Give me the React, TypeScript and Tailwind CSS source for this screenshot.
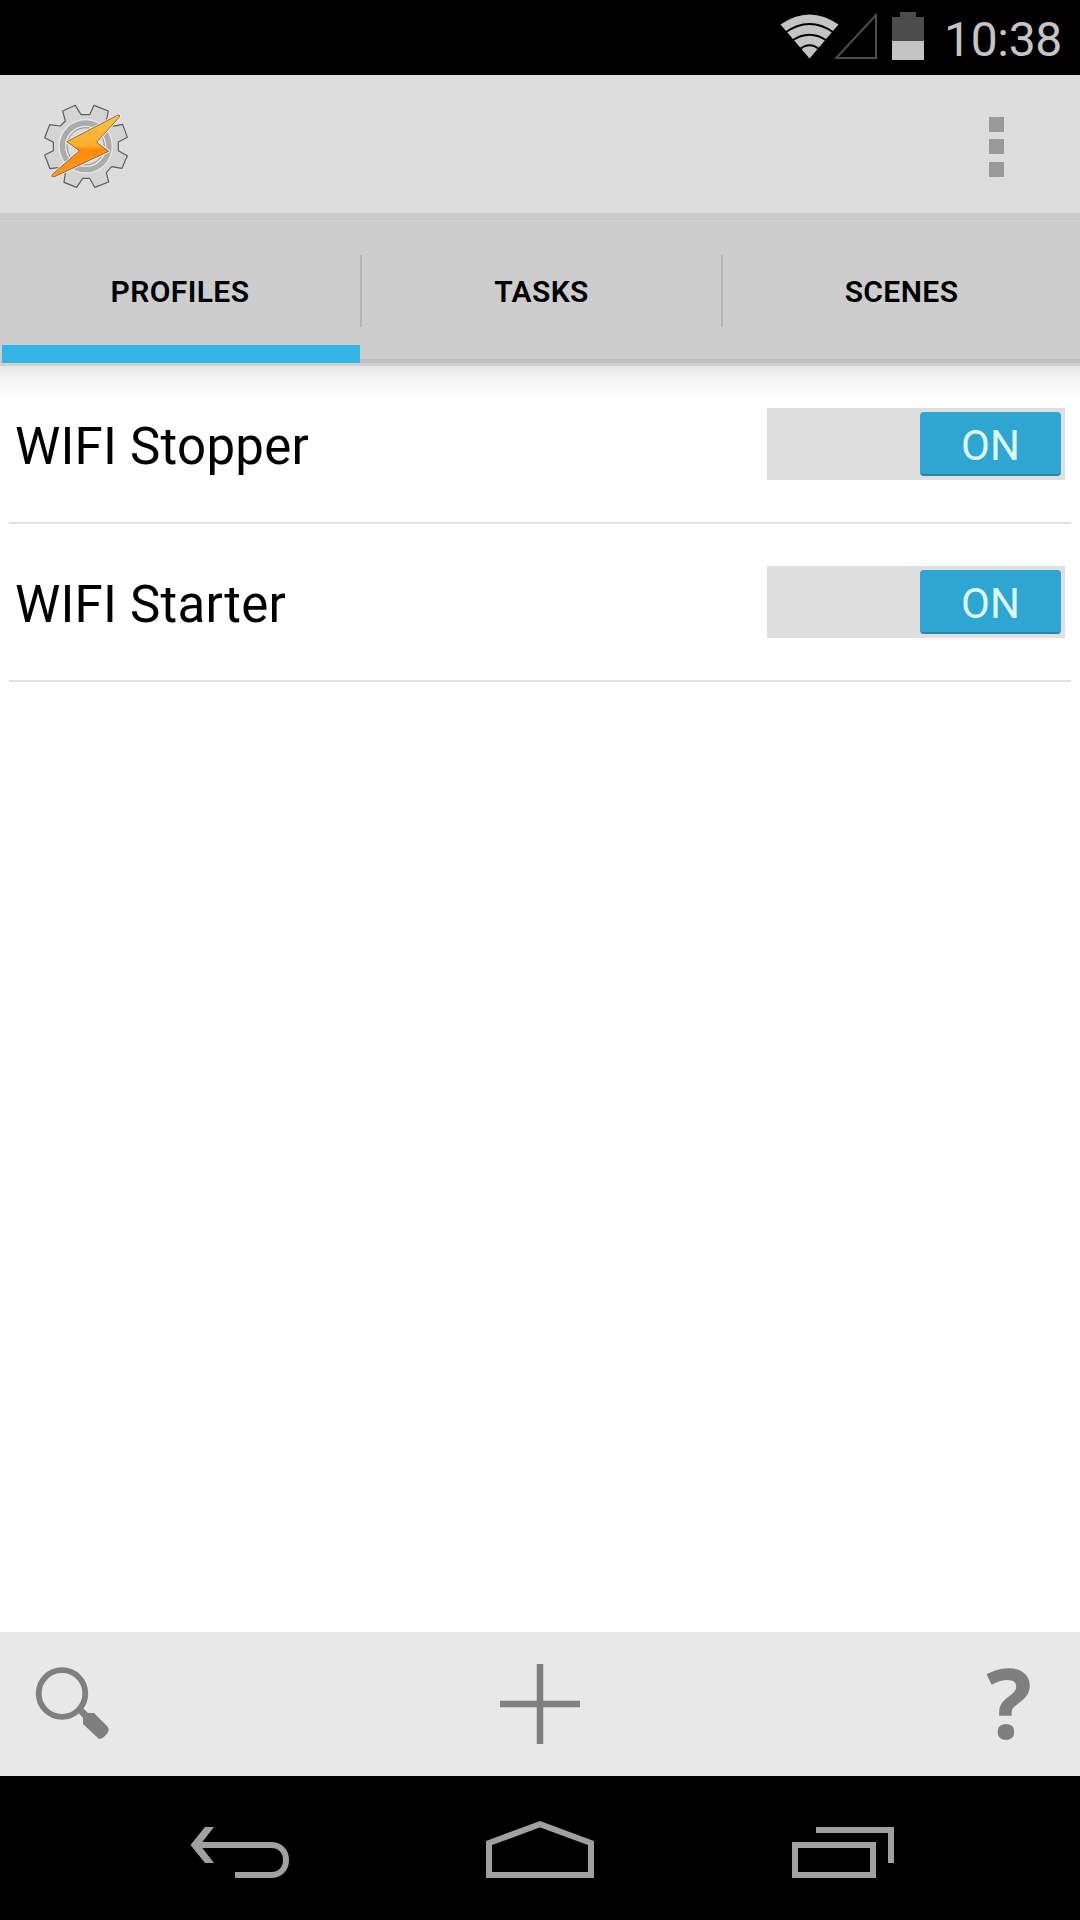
import React from "react";
import clsx from "clsx";

interface Profile {
  id: string;
  name: string;
  enabled: boolean;
}

const TABS = ["PROFILES", "TASKS", "SCENES"];

const PROFILES: Profile[] = [
  { id: "stopper", name: "WIFI Stopper", enabled: true },
  { id: "starter", name: "WIFI Starter", enabled: true },
];

function WifiIcon() {
  return (
    <svg width="59" height="45" viewBox="0 0 59 45" fill="none">
      <path d="M0.5 10.5Q29.5 -9.5 58.5 10.5L29.5 44.5Z" fill="#c4c4c4" />
      <g stroke="#000" strokeWidth="2">
        <path d="M4.500 19Q29.5 1 54.500 19" />
        <path d="M11.500 27Q29.5 14.5 47.500 27" />
        <path d="M19 36Q29.5 26.5 40 36" />
      </g>
    </svg>
  );
}

function SignalIcon() {
  return (
    <svg width="44" height="48" viewBox="0 0 44 48" fill="none">
      <path d="M2.200 46L42 3V46Z" stroke="#4c4c4c" strokeWidth="2" />
    </svg>
  );
}

function BatteryIcon() {
  return (
    <svg width="32" height="48" viewBox="0 0 32 48">
      <path d="M8 0H24V5H32V29H0V5H8Z" fill="#4c4c4c" />
      <path d="M0 29H32V48H0Z" fill="#c4c4c4" />
    </svg>
  );
}

function TaskerLogo() {
  return (
    <svg width="90" height="90" viewBox="60 60 270 270">
      <defs>
        <linearGradient id="bolt" x1="0" y1="0" x2="0" y2="1">
          <stop offset="0" stopColor="#ffc247" />
          <stop offset="0.5" stopColor="#ffad2c" />
          <stop offset="0.56" stopColor="#ff8a0a" />
          <stop offset="1" stopColor="#ff9a2a" />
        </linearGradient>
      </defs>
      <path
        d="M183 104H209L222 76L265 93L259 122L277 139L308 133L322 172L295 186V212L322 227L306 265L275 260L259 278L266 306L224 322L209 295H188L170 322L132 307L136 278L121 262L90 266L74 225L100 212V187L74 173L89 134L121 138L136 123L128 93L166 76Z"
        fill="#d4d4d4"
        stroke="#5c5c5c"
        strokeWidth="3.5"
        strokeLinejoin="round"
      />
      <circle cx="197" cy="199" r="82" fill="#e8e8e8" />
      <circle cx="197" cy="199" r="70" fill="none" stroke="#ababab" strokeWidth="16" />
      <circle cx="197" cy="199" r="56" fill="#dadada" stroke="#8a8a8a" strokeWidth="3" />
      <path
        d="M297 104L140 185L178 212L96 284Q92 293 104 290L266 214L230 187L297 112Q300 104 297 104Z"
        fill="#f0f0f0"
        stroke="#f0f0f0"
        strokeWidth="8"
        strokeLinejoin="round"
      />
      <path
        d="M294 105L140 185L178 212L96 284Q92 293 104 290L266 214L230 187L298 111Q301 103 294 105Z"
        fill="url(#bolt)"
        stroke="#705a3c"
        strokeWidth="2.5"
        strokeLinejoin="round"
      />
    </svg>
  );
}

function StatusBar() {
  return (
    <div className="flex h-[75px] items-start bg-black pl-[780px]">
      <div className="mt-[14px]">
        <WifiIcon />
      </div>
      <div className="-ml-[5px] mt-3">
        <SignalIcon />
      </div>
      <div className="ml-[14px] mt-3">
        <BatteryIcon />
      </div>
      <span className="ml-5 mt-3 text-[48px] leading-[56px] tracking-[-0.3px] text-[#c4c4c4]">10:38</span>
    </div>
  );
}

function ActionBar() {
  return (
    <header className="flex h-[138px] items-start justify-between bg-[#dddddd] pl-10 pr-[76px]">
      <div className="mt-[25px]">
        <TaskerLogo />
      </div>
      <button className="mt-[42px] flex flex-col gap-[7px]">
        <span className="size-[15px] bg-[#999999]" />
        <span className="size-[15px] bg-[#999999]" />
        <span className="mt-px size-[15px] bg-[#999999]" />
      </button>
    </header>
  );
}

function TabBar({ active, onSelect }: { active: string; onSelect: (tab: string) => void }) {
  return (
    <div className="h-[153px] border-b-[3px] border-[#d0d0d0] bg-[#cdcdcd]">
      <div className="h-[8px] border-b border-[#d3d3d3] bg-[#cacaca]" />
      <div className="flex h-[142px]">
        {TABS.map((tab, i) => (
          <button
            key={tab}
            onClick={() => onSelect(tab)}
            className={clsx("flex h-full flex-col", i === 1 ? "w-[361px]" : i === 0 ? "w-[360px]" : "w-[359px]")}
          >
            <span className="flex h-[124px] w-full items-center">
              {i > 0 && <span className="mt-[16px] h-[72px] w-[2px] bg-[#b4b4b4]" />}
              <span className="mt-[17px] flex-1 text-center text-[30px] font-semibold leading-[36px] tracking-[0.4px] text-black">
                {tab}
              </span>
            </span>
            <span
              className={clsx(
                "h-[18px] self-stretch",
                tab === active ? "ml-[2px] bg-[#35b4e6]" : "border-b-4 border-[#c0c0c0]"
              )}
            />
          </button>
        ))}
      </div>
    </div>
  );
}

function Switch({ on, onToggle }: { on: boolean; onToggle: () => void }) {
  return (
    <button
      onClick={onToggle}
      className={clsx("flex h-[72px] w-[298px] items-center bg-[#dfdfdf] px-1", on ? "justify-end" : "justify-start")}
    >
      <span
        className={clsx(
          "flex h-[64px] w-[141px] items-center justify-center rounded-[4px] border-b-2 pt-[6px] text-[42px] leading-none",
          on ? "border-[#2985a8] bg-[#2ea6d1] text-[#dcf8ff]" : "border-[#8a8a8a] bg-[#a8a8a8] text-white"
        )}
      >
        {on ? "ON" : "OFF"}
      </span>
    </button>
  );
}

function ProfileRow({ profile, onToggle }: { profile: Profile; onToggle: () => void }) {
  return (
    <li className="mx-[9px] flex h-[158px] items-center justify-between border-b-2 border-[#e2e2e2] pl-[6px] pr-[6px]">
      <span className="pt-[5px] text-[51px] leading-[60px] tracking-[0.25px] text-black">{profile.name}</span>
      <Switch on={profile.enabled} onToggle={onToggle} />
    </li>
  );
}

function BottomBar() {
  return (
    <div className="flex h-[144px] items-center justify-between bg-[#e8e8e8] pl-[35px] pr-12 text-[#7f7f7f]">
      <svg width="76" height="76" viewBox="0 0 76 76" fill="none">
        <circle cx="27" cy="27.500" r="23.3" stroke="currentColor" strokeWidth="5.800" />
        <path d="M41 44L46 40L53 47H59L72 60Q75 63.500 72.500 67Q69 72.500 64 73L48 58V52Z" fill="currentColor" />
      </svg>
      <svg width="80" height="80" viewBox="0 0 80 80" fill="none" className="-ml-[17px]">
        <path d="M40 0V80M0 40H80" stroke="currentColor" strokeWidth="6.500" />
      </svg>
      <span className="pb-1 font-['Open_Sans'] text-[96px] font-bold leading-none">?</span>
    </div>
  );
}

function NavBar() {
  return (
    <nav className="flex h-[144px] gap-[196px] bg-black pl-[190px] pt-[45px]">
      <svg width="100" height="58" viewBox="0 0 100 58" fill="none" stroke="#a0a0a0" strokeWidth="6">
        <path d="M8 24H81C90 24 96 30 96 39C96 48 90 54 81 54H45" />
        <path d="M15 6H24L10 24L24 42H15L0.500 24Z" fill="#a0a0a0" stroke="none" />
      </svg>
      <svg width="108" height="58" viewBox="0 0 108 58" fill="none" stroke="#a0a0a0" strokeWidth="6">
        <path d="M3 54V22L54 3.200L105 22V54Z" />
      </svg>
      <svg width="106" height="58" viewBox="-2 0 106 58" fill="none" stroke="#a0a0a0" strokeWidth="6">
        <path d="M3 24H81V54H3Z" />
        <path d="M24 9H99V42" />
      </svg>
    </nav>
  );
}

export default function App() {
  const [activeTab, setActiveTab] = React.useState("PROFILES");
  const [profiles, setProfiles] = React.useState(PROFILES);

  const toggle = (id: string) => {
    setProfiles((prev) => prev.map((p) => (p.id === id ? { ...p, enabled: !p.enabled } : p)));
  };

  return (
    <div className="flex h-[1920px] w-[1080px] flex-col overflow-hidden bg-white font-['Roboto',sans-serif]">
      <StatusBar />
      <ActionBar />
      <TabBar active={activeTab} onSelect={setActiveTab} />
      <main className="flex-1 bg-[linear-gradient(to_bottom,#e6e6e6_0px,#f4f4f4_12px,#ffffff_36px)]">
        <ul>
          {profiles.map((profile) => (
            <ProfileRow key={profile.id} profile={profile} onToggle={() => toggle(profile.id)} />
          ))}
        </ul>
      </main>
      <BottomBar />
      <NavBar />
    </div>
  );
}
